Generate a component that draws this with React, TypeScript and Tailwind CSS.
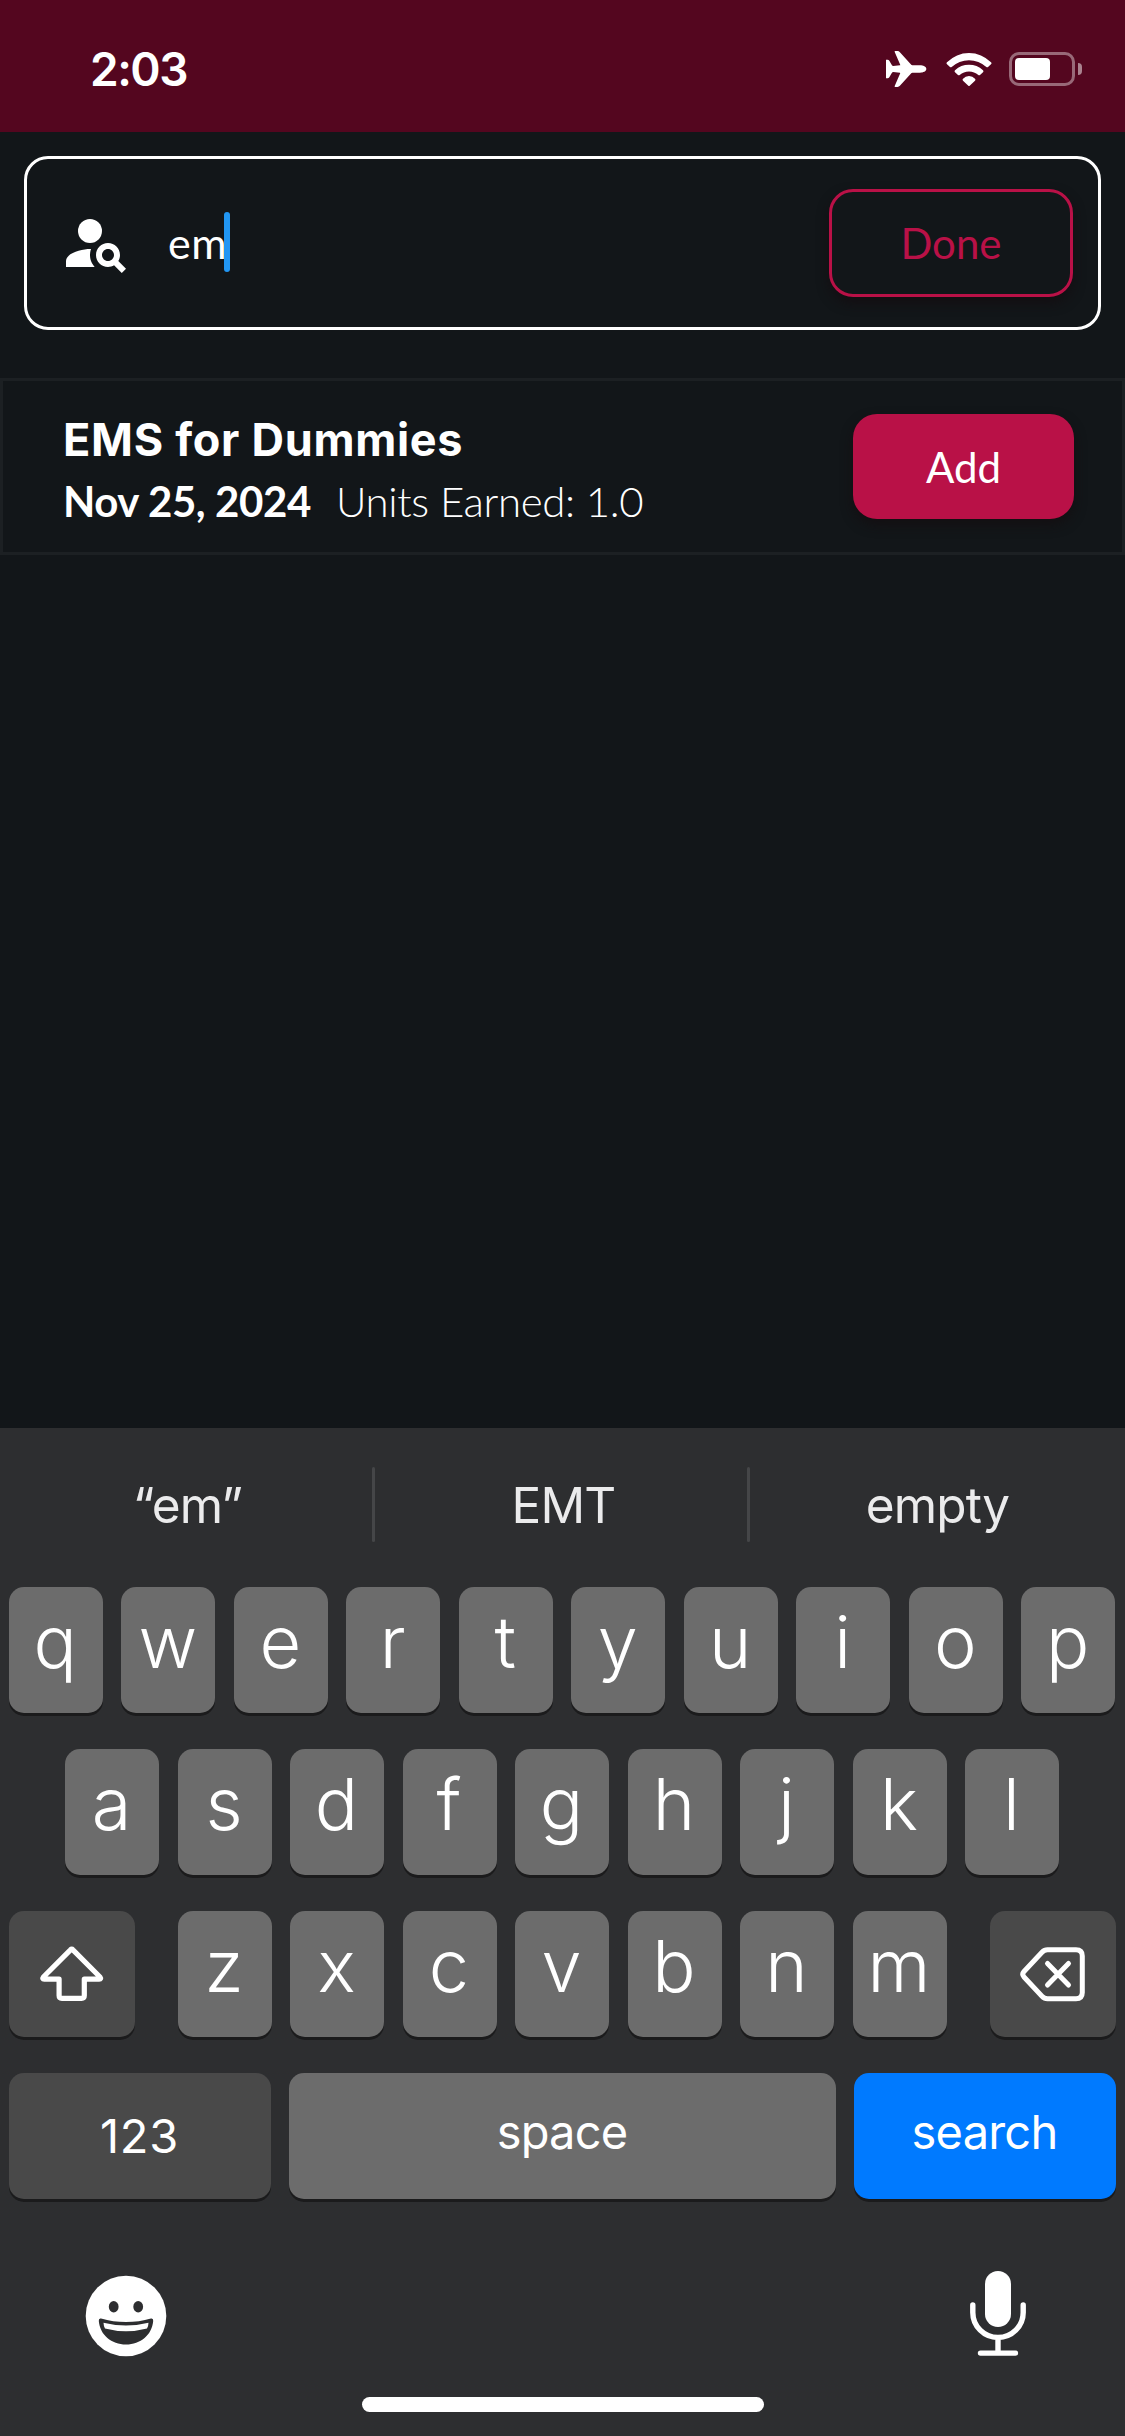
import type { ReactNode } from "react";
import { MdPersonSearch } from "react-icons/md";

function AirplaneIcon() {
  return (
    <svg className="h-[38px] w-[41px]" viewBox="0 0 124 114" fill="white">
      <path d="M122 57C122 50 112 46 103 46L80 46Q77 46 75 43L42 6Q39 2.500 35 2.500L28 2.500Q25.500 2.500 26 5L43 44Q43.500 46 42 46L22 48Q19 48 18 46L10 32Q8 29 5 29L0 29L0 85L5 85Q8 85 10 82L18 68Q19 66 22 66L42 68Q43.500 68 43 70L26 109Q25.500 111.500 28 111.500L35 111.500Q39 111.500 42 108L75 71Q77 68 80 68L103 68C112 68 122 64 122 57Z" />
    </svg>
  );
}

function WifiIcon() {
  return (
    <svg className="h-[35px] w-[46px]" viewBox="0 0 138 105" fill="white">
      <path d="M3 31A92 92 0 0 1 135 31Q138 34 135 37L126 45Q124 47 121 45A76 76 0 0 0 17 45Q14 47 12 45L3 37Q0 34 3 31Z" />
      <path d="M27 55A62 62 0 0 1 111 55Q114 58 111 61L102 69Q99 71 97 69A42 42 0 0 0 41 69Q39 71 36 69L27 61Q24 58 27 55Z" />
      <path d="M51 80A24 24 0 0 1 87 80Q90 83 87 86L71 101Q69 103 67 101L51 86Q48 83 51 80Z" />
    </svg>
  );
}

function BatteryIcon() {
  return (
    <div className="flex items-center gap-[3px]">
      <div className="h-[34px] w-[66px] rounded-[10px] border-[3px] border-white/40 p-[3px]">
        <div className="h-[22px] w-[35px] rounded-[4px] bg-white" />
      </div>
      <div className="h-[12px] w-[4px] rounded-r-full bg-white/50" />
    </div>
  );
}

function ShiftIcon() {
  return (
    <svg className="h-[58px] w-[66px]" viewBox="0 0 66 58" fill="none" stroke="white" strokeWidth="5.200" strokeLinejoin="round">
      <path d="M31.500 4.800Q32.700 3.500 33.900 4.800L61 32Q62.500 34 60 34.200L45.300 34.200L45.300 50.500Q45.300 53.300 42.500 53.300L22.900 53.300Q20.100 53.300 20.100 50.500L20.100 34.200L5.400 34.200Q2.900 34 4.400 32Z" />
    </svg>
  );
}

function DeleteIcon() {
  return (
    <svg className="h-[56px] w-[66px]" viewBox="0 0 66 56" fill="none" stroke="white" strokeWidth="5" strokeLinejoin="round" strokeLinecap="round">
      <path d="M4 25.500L22 6.200Q24.300 3.800 27.500 3.800L56 3.800Q62.300 3.800 62.300 10L62.300 46.500Q62.300 52.700 56 52.700L27.500 52.700Q24.300 52.700 22 50.300L4 31Q1.500 28.250 4 25.500Z" />
      <path d="M27.500 17.500L48.500 39M48.500 17.500L27.500 39" />
    </svg>
  );
}

function EmojiIcon() {
  return (
    <svg className="h-[82px] w-[82px]" viewBox="0 0 82 82">
      <circle cx="41" cy="41" r="40.300" fill="white" />
      <g fill="#2d2e30">
        <ellipse cx="28.700" cy="31.700" rx="4.900" ry="5.700" />
        <ellipse cx="53.200" cy="31.700" rx="4.900" ry="5.700" />
        <path d="M16 43.500Q28 47 41 47Q54 47 66 43.500Q68.500 43 68.200 46C67 60 55.500 69.500 41 69.500C26.500 69.500 15 60 13.800 46Q13.500 43 16 43.500Z" />
      </g>
      <path d="M18.500 47.800Q29.500 50.600 41 50.600Q52.500 50.600 63.500 47.800Q63.500 50.500 62 53.500Q52 56.200 41 56.200Q30 56.200 20 53.500Q18.500 50.500 18.500 47.800Z" fill="white" />
    </svg>
  );
}

function MicIcon() {
  return (
    <svg className="h-[86px] w-[58px]" viewBox="0 0 58 86" fill="none" stroke="white" strokeWidth="5.400" strokeLinecap="round">
      <rect x="16" y="1" width="26" height="56" rx="13" fill="white" stroke="none" />
      <path d="M3.800 35V42.500A25.200 25 0 0 0 54.200 42.500V35M29 68V83M11.500 83.100H46.500" />
    </svg>
  );
}

function Key({ children, className = "w-[94px] bg-[#6c6c6c]" }: { children: ReactNode; className?: string }) {
  return (
    <div className={`flex h-[126px] shrink-0 items-center justify-center rounded-[15px] shadow-[0_3px_0_#1b1b1c] ${className}`}>
      {children}
    </div>
  );
}

function LetterKeys({ letters }: { letters: string }) {
  return (
    <div className="flex justify-center gap-[18.500px]">
      {letters.split("").map((letter) => (
        <Key key={letter}>
          <span className="pr-px pb-[17px] text-[72px] leading-[109px] font-light">{letter}</span>
        </Key>
      ))}
    </div>
  );
}

export default function App() {
  return (
    <div className="flex h-[2436px] w-[1125px] flex-col overflow-hidden bg-[#121619] font-['Inter',sans-serif] text-white">
      <header className="flex h-[132px] shrink-0 items-start justify-between bg-[#54061f] pr-[43px] pl-[90px]">
        <span className="pt-[41px] text-[46px] leading-[56px] font-semibold tracking-[-1.500px]">2:03</span>
        <div className="flex h-[138px] items-center">
          <AirplaneIcon />
          <div className="ml-[19px]">
            <WifiIcon />
          </div>
          <div className="ml-[17px]">
            <BatteryIcon />
          </div>
        </div>
      </header>

      <main className="flex flex-1 flex-col font-['Lato',sans-serif]">
        <div className="mx-6 mt-6 flex h-[174px] items-center rounded-[24px] border-[3px] border-white pr-[25px] pl-[33px]">
          <MdPersonSearch className="size-[72px]" />
          <span className="ml-[36px] w-[56px] text-[43px] leading-[60px] tracking-[0.500px]">em</span>
          <span className="mb-[2px] h-[60px] w-[6px] rounded-full bg-[#2196f3]" />
          <button className="ml-auto flex h-[108px] w-[244px] items-center justify-center rounded-[24px] border-[3px] border-[#b91147] bg-[#121619] text-[42px] text-[#b91147] shadow-[0_6px_12px_rgba(20,12,16,0.800)]">
            <span className="leading-[60px]">Done</span>
          </button>
        </div>

        <div className="mt-12 flex h-[177px] items-start justify-between border-[3px] border-[#1c2023] pr-12 pl-[60px]">
          <div className="pt-[26px]">
            <div className="font-['Inter',sans-serif] text-[45px] leading-[66px] font-bold tracking-[0.700px] whitespace-nowrap">EMS for Dummies</div>
            <div className="mt-[-2px] flex gap-[25px] text-[42px] leading-[60px] whitespace-nowrap">
              <span className="font-bold tracking-[-0.400px]">Nov 25, 2024</span>
              <span className="font-light tracking-[-0.350px]">Units Earned: 1.0</span>
            </div>
          </div>
          <button className="mt-[33px] flex h-[105px] w-[221px] items-center justify-center rounded-[24px] bg-[#b91147] text-[42px] leading-[60px] shadow-[0_6px_12px_rgba(20,14,16,0.800)]">
            Add
          </button>
        </div>
      </main>

      <section className="flex h-[1008px] shrink-0 flex-col bg-[#2d2e30]">
        <div className="flex h-[159px] pt-[39px] text-[49.500px] leading-[77px] tracking-[-0.800px] text-[#ebebec]">
          <div className="flex h-[75px] w-[372px] justify-center pl-[3px]">“em”</div>
          <div className="h-[75px] w-[3px] rounded-full bg-[#454648]" />
          <div className="flex h-[75px] w-[372px] justify-center pl-[5px]">EMT</div>
          <div className="h-[75px] w-[3px] rounded-full bg-[#454648]" />
          <div className="flex h-[75px] w-[375px] justify-center">empty</div>
        </div>

        <div className="flex flex-col gap-9 pr-[9.500px] pl-[8.500px]">
          <LetterKeys letters="qwertyuiop" />
          <LetterKeys letters="asdfghjkl" />
          <div className="flex justify-between">
            <Key className="w-[126px] bg-[#494949]">
              <ShiftIcon />
            </Key>
            <LetterKeys letters="zxcvbnm" />
            <Key className="w-[126px] bg-[#494949]">
              <DeleteIcon />
            </Key>
          </div>
          <div className="flex justify-between text-[47px] leading-[60px]">
            <Key className="w-[262px] bg-[#494949]">
              <span className="tracking-[0.700px]">123</span>
            </Key>
            <Key className="w-[547px] bg-[#6c6c6c]">
              <span className="pb-[8px] tracking-[-0.800px]">space</span>
            </Key>
            <Key className="w-[262px] bg-[#007aff]">
              <span className="pb-[8px] tracking-[-0.800px]">search</span>
            </Key>
          </div>
        </div>

        <div className="mt-[71px] flex items-start justify-between pr-[98px] pl-[85px]">
          <div className="pt-[5px]">
            <EmojiIcon />
          </div>
          <MicIcon />
        </div>
        <div className="mt-[40px] h-[15px] w-[402px] self-center rounded-full bg-white" />
      </section>
    </div>
  );
}
